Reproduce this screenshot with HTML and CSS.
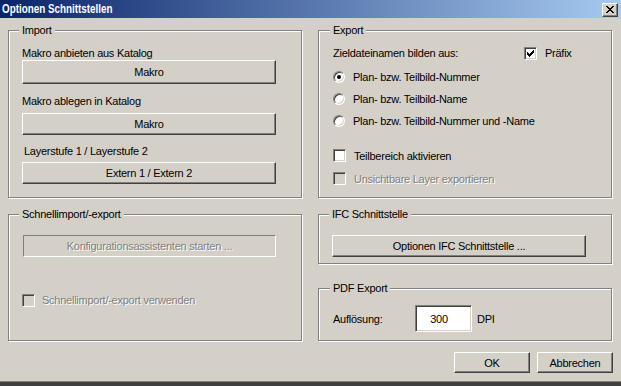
FILE: index.html
```html
<!DOCTYPE html>
<html lang="de">
<head>
<meta charset="UTF-8">
<title>Optionen Schnittstellen</title>
<link rel="stylesheet" href="styles.css">
</head>
<body>

<div class="dialog">
  <div class="titlebar">
    <span class="title">Optionen Schnittstellen</span>
    <button class="close-btn" aria-label="Schließen">
      <svg width="8" height="7" viewBox="0 0 8 7">
        <path d="M0 0h2v1h1v1h2V1h1V0h2v1H7v1H6v1H5v1h1v1h1v1h1v1H6V6H5V5H3v1H2v1H0V6h1V5h1V4h1V3H2V2H1V1H0z" fill="#000"/>
      </svg>
    </button>
  </div>

  <div class="content">
    <div class="columns">

      <div class="column">
        <fieldset class="group group-import">
          <legend>Import</legend>
          <div class="field-label">Makro anbieten aus Katalog</div>
          <button class="btn btn-wide btn-tall">Makro</button>
          <div class="field-label label-2">Makro ablegen in Katalog</div>
          <button class="btn btn-wide">Makro</button>
          <div class="field-label label-3">Layerstufe 1 / Layerstufe 2</div>
          <button class="btn btn-wide">Extern 1 / Extern 2</button>
        </fieldset>

        <fieldset class="group group-quick">
          <legend>Schnellimport/-export</legend>
          <button class="btn btn-wide btn-disabled" disabled>Konfigurationsassistenten starten ...</button>
          <label class="check-row quick-check disabled">
            <span class="check"></span>
            <span>Schnellimport/-export verwenden</span>
          </label>
        </fieldset>
      </div>

      <div class="column">
        <fieldset class="group group-export">
          <legend>Export</legend>
          <div class="export-head">
            <span class="export-head-text">Zieldateinamen bilden aus:</span>
            <label class="check-row">
              <span class="check checked">
                <svg width="7" height="7" viewBox="0 0 7 7">
                  <path d="M6 0h1v3H6v1H5v1H4v1H3v1H2V6H1V5H0V2h1v1h1v1h1V3h1V2h1V1h1z" fill="#000"/>
                </svg>
              </span>
              <span>Präfix</span>
            </label>
          </div>
          <div class="radio-list">
            <label class="radio-row"><span class="radio selected"></span><span>Plan- bzw. Teilbild-Nummer</span></label>
            <label class="radio-row"><span class="radio"></span><span>Plan- bzw. Teilbild-Name</span></label>
            <label class="radio-row"><span class="radio"></span><span>Plan- bzw. Teilbild-Nummer und -Name</span></label>
          </div>
          <div class="check-list">
            <label class="check-row"><span class="check"></span><span>Teilbereich aktivieren</span></label>
            <label class="check-row disabled"><span class="check"></span><span>Unsichtbare Layer exportieren</span></label>
          </div>
        </fieldset>

        <fieldset class="group group-ifc">
          <legend>IFC Schnittstelle</legend>
          <button class="btn btn-wide">Optionen IFC Schnittstelle ...</button>
        </fieldset>

        <fieldset class="group group-pdf">
          <legend>PDF Export</legend>
          <div class="pdf-row">
            <span class="pdf-label">Auflösung:</span>
            <input class="dpi-input" type="text" value="300">
            <span>DPI</span>
          </div>
        </fieldset>
      </div>

    </div>

    <div class="actions">
      <button class="btn btn-action">OK</button>
      <button class="btn btn-action">Abbrechen</button>
    </div>
  </div>

  <div class="taskbar"></div>
</div>

</body>
</html>
```

FILE: styles.css
```css
/* Classic dialog */
body {
  margin: 0;
  background-color: #d4d0c8;
  font-family: "Liberation Sans", Arial, sans-serif;
  font-size: 11px;
  letter-spacing: -0.25px;
  color: #000;
}

.dialog {
  width: 621px;
  height: 386px;
  display: flex;
  flex-direction: column;
  overflow: hidden;
}

/* Title bar */
.titlebar {
  height: 18px;
  background: linear-gradient(to right, #0a246a, #a6caf0);
  display: flex;
  justify-content: space-between;
  align-items: center;
  padding: 0 3px 0 2px;
  flex-shrink: 0;
}

.title {
  color: #fff;
  font-weight: bold;
  font-size: 12px;
  letter-spacing: 0;
  transform: scaleX(0.82);
  transform-origin: left center;
}

.close-btn {
  width: 16px;
  height: 14px;
  padding: 0;
  margin-top: 1px;
  background-color: #d4d0c8;
  border: 1px solid;
  border-color: #fff #404040 #404040 #fff;
  box-shadow: inset -1px -1px #808080;
  display: flex;
  align-items: center;
  justify-content: center;
}

/* Body */
.content {
  flex: 1;
  padding: 5px 8px 0 8px;
}

.columns {
  display: grid;
  grid-template-columns: 294px 294px;
  column-gap: 16px;
}

.column {
  display: flex;
  flex-direction: column;
  gap: 9px;
}

/* Group boxes */
.group {
  box-sizing: border-box;
  margin: 0;
  padding: 0 0 0 13px;
  min-inline-size: 0;
  border: 1px solid #808080;
  box-shadow: 1px 1px 0 #fff, inset 1px 1px 0 #fff;
}

.group legend {
  padding: 0 3px;
  margin-left: -3px;
  line-height: 14px;
  background-color: #d4d0c8;
}

.group-import { height: 175px; padding-top: 10px; }
.group-quick { height: 134px; padding-top: 14px; }
.group-export { height: 175px; padding-top: 10px; padding-left: 14px; }
.group-ifc { height: 57px; padding-top: 14px; }
.group-pdf { height: 60px; margin-top: 8px; padding-left: 14px; }

.field-label {
  line-height: 13px;
}

.label-2 { margin-top: 11px; margin-bottom: 5px; }
.label-3 { margin-top: 10px; margin-bottom: 4px; padding-left: 2px; }

/* Buttons */
.btn {
  box-sizing: border-box;
  background-color: #d4d0c8;
  border: 1px solid;
  border-color: #fff #404040 #404040 #fff;
  box-shadow: inset -1px -1px #808080;
  font: inherit;
  letter-spacing: inherit;
  color: #000;
  padding: 0;
  display: block;
}

.btn-wide {
  width: 254px;
  height: 22px;
}

.btn-tall { height: 24px; }

.btn-disabled {
  border-color: #808080 #fff #fff #808080;
  box-shadow: none;
  color: #808080;
  text-shadow: 1px 1px #fff;
  margin-left: 1px;
  width: 253px;
}

.btn-action {
  width: 76px;
  height: 21px;
}

.actions {
  display: flex;
  justify-content: flex-end;
  gap: 7px;
  margin-top: 11px;
}

/* Checkboxes and radios */
.check-row, .radio-row {
  display: flex;
  align-items: center;
  gap: 7px;
}

.check {
  box-sizing: border-box;
  width: 13px;
  height: 13px;
  border: 1px solid;
  border-color: #808080 #fff #fff #808080;
  box-shadow: inset 1px 1px #404040, inset -1px -1px #d4d0c8;
  background-color: #fff;
  display: flex;
  align-items: center;
  justify-content: center;
  flex-shrink: 0;
}

.disabled {
  color: #808080;
}

.disabled span:last-child {
  text-shadow: 1px 1px #fff;
}

.disabled .check {
  background-color: #d4d0c8;
}

.radio {
  box-sizing: border-box;
  width: 12px;
  height: 12px;
  border-radius: 50%;
  border: 1px solid;
  border-color: #808080 #fff #fff #808080;
  box-shadow: inset 1px 1px #404040, inset -1px -1px #d4d0c8;
  background-color: #fff;
  display: flex;
  align-items: center;
  justify-content: center;
  flex-shrink: 0;
}

.radio.selected::after {
  content: "";
  width: 4px;
  height: 4px;
  border-radius: 50%;
  background-color: #000;
}

.export-head {
  display: flex;
  align-items: center;
  line-height: 13px;
}

.export-head-text {
  width: 191px;
}

.export-head .check-row {
  gap: 8px;
}

.radio-list {
  margin-top: 6px;
}

.radio-row {
  height: 22px;
  gap: 8px;
}

.check-list {
  margin-top: 12px;
}

.check-list .check-row {
  height: 23px;
  gap: 8px;
}

.quick-check {
  height: 20px;
  margin-top: 33px;
  gap: 7px;
}

/* PDF */
.pdf-row {
  display: flex;
  align-items: center;
  margin-top: 10px;
}

.pdf-label {
  width: 82px;
}

.dpi-input {
  box-sizing: border-box;
  width: 57px;
  height: 27px;
  margin: 0 5px 0 0;
  border: 1px solid;
  border-color: #808080 #fff #fff #808080;
  box-shadow: inset 1px 1px #404040, inset -1px -1px #d4d0c8;
  background-color: #fff;
  font: inherit;
  letter-spacing: inherit;
  text-align: center;
  padding: 0 9px 0 0;
}

/* Strip of the desktop below */
.taskbar {
  height: 4px;
  background-color: #404040;
  border-top: 1px solid #808080;
  flex-shrink: 0;
}
```
